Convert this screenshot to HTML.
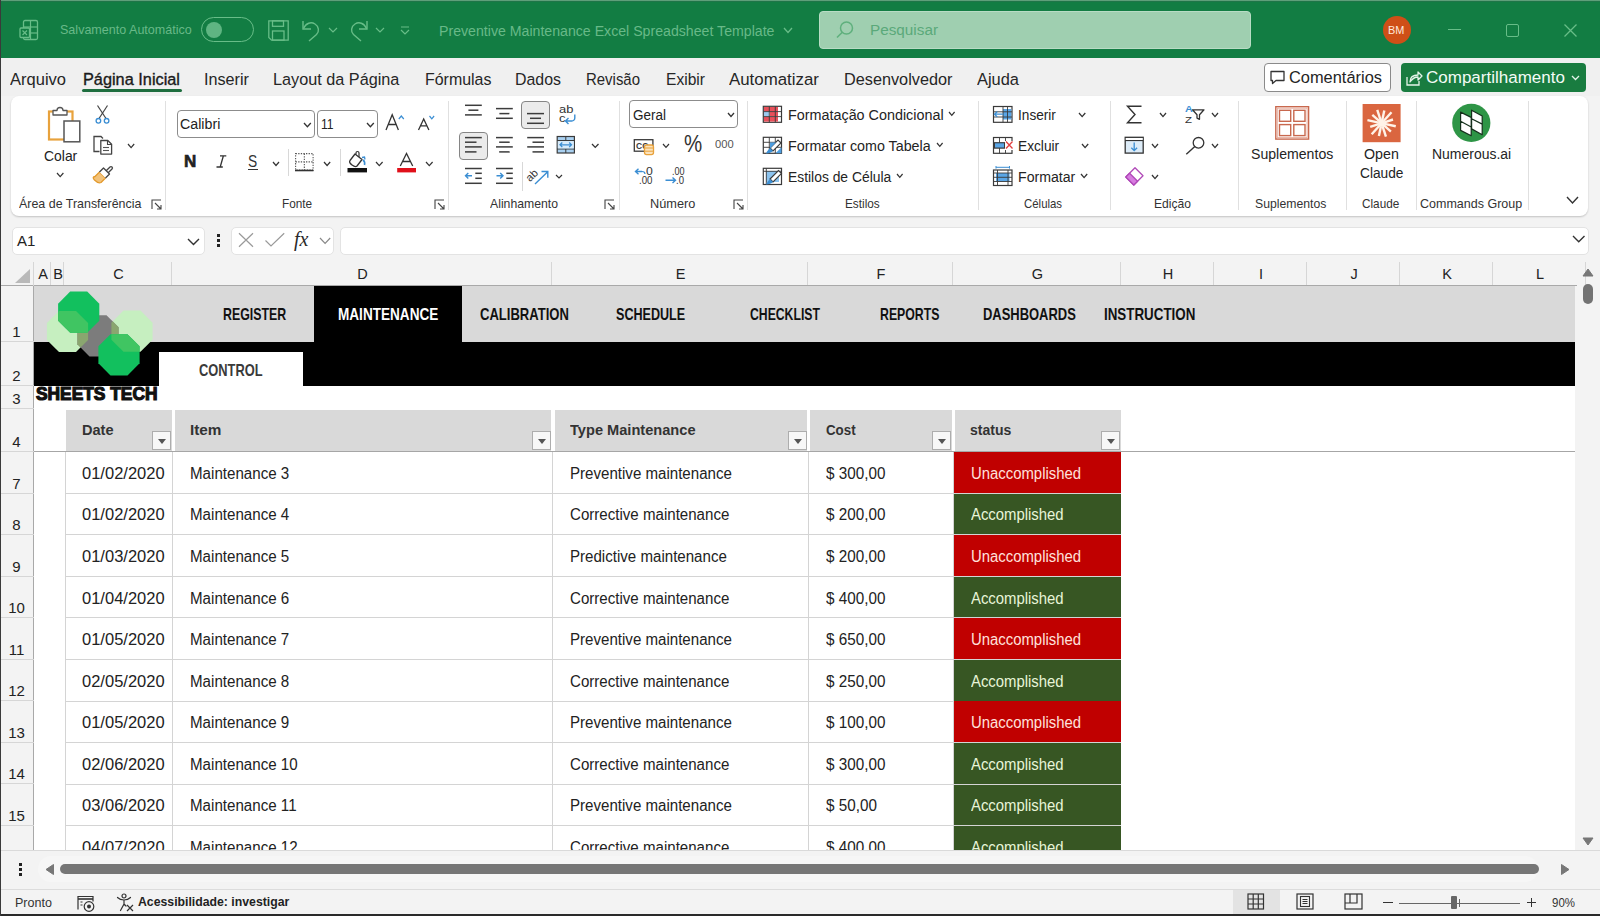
<!DOCTYPE html><html><head><meta charset="utf-8"><style>
*{box-sizing:border-box;margin:0;padding:0}
html,body{width:1600px;height:916px;overflow:hidden;background:#f3f3f3;font-family:"Liberation Sans",sans-serif;color:#242424}
.a{position:absolute}
.t{position:absolute;white-space:nowrap;line-height:1}
svg{position:absolute;overflow:visible}
.sep{position:absolute;width:1px;background:#e0e0e0}
.glab{position:absolute;top:198px;font-size:12.5px;color:#333;white-space:nowrap;line-height:1}
.colh{position:absolute;top:262px;height:24px;border-right:1px solid #d6d6d6;font-size:14.5px;text-align:center;line-height:25px;color:#222;padding-left:2px}
.rowh{position:absolute;left:0;width:34px;background:#f3f3f3;border-right:1px solid #a9a9a9;font-size:15px;color:#222}
.rowh span{position:absolute;bottom:2px;left:0;width:33px;text-align:center;line-height:16px}
.rh{position:absolute;left:0;width:34px;height:1px;background:#d6d6d6}
.cell{position:absolute;font-size:15px;color:#222;white-space:nowrap;line-height:1}
.nav{position:absolute;top:307px;font-size:14.5px;font-weight:bold;color:#111;white-space:nowrap;line-height:1;letter-spacing:-0.2px}
.hdr{position:absolute;top:410px;height:41px;background:#d9d9d9}
.hdr span{position:absolute;left:16px;top:13px;font-size:15px;font-weight:bold;color:#333;line-height:1;white-space:nowrap}
.fb{position:absolute;top:431px;width:19px;height:19px;background:#f7f7f7;border:1px solid #adadad}
.fb:after{content:"";position:absolute;left:5px;top:7px;border-left:4px solid transparent;border-right:4px solid transparent;border-top:5px solid #555}
.menu{position:absolute;top:70px;font-size:16.5px;color:#242424;white-space:nowrap;line-height:1}
.rib{position:absolute;font-size:14.5px;color:#242424;white-space:nowrap;line-height:1}
.chev{position:absolute}
</style></head><body>
<div class="a" style="left:0;top:0;width:1600px;height:58px;background:#127d43"></div>
<div class="a" style="left:0;top:0;width:1600px;height:1px;background:#5f9f7a"></div>
<div class="a" style="left:0;top:1px;width:1600px;height:1px;background:#1f7548"></div>
<div class="a" style="left:0;top:0;width:1px;height:916px;background:#3a3a3a"></div>
<svg style="left:19px;top:19px" width="22" height="22" viewBox="0 0 22 22"><rect x="4.5" y="1.5" width="14" height="19" rx="1.5" fill="none" stroke="#68bd88" stroke-width="1.3"/><line x1="4.5" y1="8" x2="18.5" y2="8" stroke="#68bd88" stroke-width="1.2"/><line x1="4.5" y1="14" x2="18.5" y2="14" stroke="#68bd88" stroke-width="1.2"/><line x1="11.5" y1="1.5" x2="11.5" y2="20.5" stroke="#68bd88" stroke-width="1.2"/><rect x="1" y="9" width="9.5" height="9.5" rx="1" fill="#127d43" stroke="#68bd88" stroke-width="1.3"/><path d="M3.5 11.5l4.5 4.5M8 11.5l-4.5 4.5" stroke="#68bd88" stroke-width="1.2"/></svg>
<div class="t" style="left:60.0px;top:23.8px;font-size:12.90px;color:#68b988;transform:scaleX(0.973);transform-origin:0 0;">Salvamento Automático</div>
<div class="a" style="left:201px;top:17px;width:53px;height:25px;border:1.3px solid #68bd88;border-radius:13px"></div>
<div class="a" style="left:206px;top:22px;width:16px;height:16px;border-radius:8px;background:#5fb582"></div>
<svg style="left:268px;top:20px" width="21" height="21" viewBox="0 0 21 21"><path d="M0.8 0.8h19.4v19.4H3.5L0.8 17.5z" fill="none" stroke="#68bd88" stroke-width="1.3"/><rect x="4.5" y="0.8" width="11" height="5.5" fill="none" stroke="#68bd88" stroke-width="1.3"/><rect x="4.5" y="11" width="11.5" height="9.2" fill="none" stroke="#68bd88" stroke-width="1.3"/></svg>
<svg style="left:302px;top:20px" width="24" height="24" viewBox="0 0 24 24"><path d="M1 1v8h8" fill="none" stroke="#68bd88" stroke-width="1.4"/><path d="M1.5 8.5C4 3 9 1.5 13 4c4 2.5 4.5 7.5 1.5 10.5L7 21" fill="none" stroke="#68bd88" stroke-width="1.4"/></svg>
<svg style="left:328px;top:27px" width="10" height="6" viewBox="0 0 10 6"><path d="M1 1l4 4 4-4" fill="none" stroke="#68bd88" stroke-width="1.2"/></svg>
<svg style="left:345px;top:20px" width="24" height="24" viewBox="0 0 24 24"><path d="M22 1v8h-8" fill="none" stroke="#68bd88" stroke-width="1.4"/><path d="M21.5 8.5C19 3 14 1.5 10 4c-4 2.5-4.5 7.5-1.5 10.5L16 21" fill="none" stroke="#68bd88" stroke-width="1.4"/></svg>
<svg style="left:375px;top:27px" width="10" height="6" viewBox="0 0 10 6"><path d="M1 1l4 4 4-4" fill="none" stroke="#68bd88" stroke-width="1.2"/></svg>
<svg style="left:400px;top:26px" width="10" height="10" viewBox="0 0 10 10"><path d="M1 1h8M1 4l4 4 4-4" fill="none" stroke="#68bd88" stroke-width="1.2"/></svg>
<div class="t" style="left:438.5px;top:22.8px;font-size:15.07px;color:#68b988;transform:scaleX(0.939);transform-origin:0 0;">Preventive Maintenance Excel Spreadsheet Template</div>
<svg style="left:783px;top:27px" width="10" height="7" viewBox="0 0 10 7"><path d="M1 1l4 4.5 4-4.5" fill="none" stroke="#68bd88" stroke-width="1.3"/></svg>
<div class="a" style="left:819px;top:11px;width:432px;height:38px;background:#9fcfb0;border:1px solid #b8dcc5;border-radius:4px"></div>
<svg style="left:835px;top:20px" width="20" height="20" viewBox="0 0 20 20"><circle cx="11.5" cy="8" r="6" fill="none" stroke="#5fb07d" stroke-width="1.5"/><path d="M7.3 12.2L2 17.5" stroke="#5fb07d" stroke-width="1.6"/></svg>
<div class="t" style="left:870.4px;top:21.8px;font-size:15.22px;color:#5aa97a;transform:scaleX(1.005);transform-origin:0 0;">Pesquisar</div>
<div class="a" style="left:1383px;top:16px;width:28px;height:28px;border-radius:14px;background:#cf4f17"></div>
<div class="t" style="left:1388.4px;top:24.6px;font-size:11.59px;color:#ffe9dc;transform:scaleX(0.943);transform-origin:0 0;">BM</div>
<div class="a" style="left:1448px;top:29px;width:13px;height:1.3px;background:#68bd88"></div>
<div class="a" style="left:1506px;top:24px;width:13px;height:13px;border:1.3px solid #68bd88;border-radius:2px"></div>
<svg style="left:1564px;top:24px" width="13" height="13" viewBox="0 0 13 13"><path d="M0.5 0.5l12 12M12.5 0.5l-12 12" stroke="#68bd88" stroke-width="1.3"/></svg>
<div class="a" style="left:1px;top:58px;width:1599px;height:38px;background:#f0f0f0"></div>
<div class="t" style="left:10.3px;top:70.6px;font-size:16.23px;color:#262626;transform:scaleX(1.018);transform-origin:0 0;">Arquivo</div>
<div class="t" style="left:83.0px;top:70.6px;font-size:16.23px;color:#1a1a1a;transform:scaleX(1.005);transform-origin:0 0;-webkit-text-stroke:0.35px #1a1a1a;">Página Inicial</div>
<div class="t" style="left:203.5px;top:70.6px;font-size:16.23px;color:#262626;transform:scaleX(0.998);transform-origin:0 0;">Inserir</div>
<div class="t" style="left:272.5px;top:70.6px;font-size:16.23px;color:#262626;transform:scaleX(1.001);transform-origin:0 0;">Layout da Página</div>
<div class="t" style="left:425.0px;top:70.6px;font-size:16.23px;color:#262626;transform:scaleX(0.983);transform-origin:0 0;">Fórmulas</div>
<div class="t" style="left:515.0px;top:70.6px;font-size:16.23px;color:#262626;transform:scaleX(0.980);transform-origin:0 0;">Dados</div>
<div class="t" style="left:586.0px;top:70.6px;font-size:16.23px;color:#262626;transform:scaleX(0.921);transform-origin:0 0;">Revisão</div>
<div class="t" style="left:666.0px;top:70.6px;font-size:16.23px;color:#262626;transform:scaleX(0.961);transform-origin:0 0;">Exibir</div>
<div class="t" style="left:729.0px;top:70.6px;font-size:16.23px;color:#262626;transform:scaleX(1.039);transform-origin:0 0;">Automatizar</div>
<div class="t" style="left:844.0px;top:70.6px;font-size:16.23px;color:#262626;transform:scaleX(1.002);transform-origin:0 0;">Desenvolvedor</div>
<div class="t" style="left:976.5px;top:70.6px;font-size:16.23px;color:#262626;transform:scaleX(1.012);transform-origin:0 0;">Ajuda</div>
<div class="a" style="left:82px;top:89px;width:100px;height:3px;background:#1e6e3f;border-radius:2px"></div>
<div class="a" style="left:1264px;top:63px;width:127px;height:29px;background:#fff;border:1px solid #8a8a8a;border-radius:4px"></div>
<svg style="left:1269px;top:69px" width="18" height="18" viewBox="0 0 18 18"><path d="M2 2.5h13v9H7l-3.5 3v-3H2z" fill="none" stroke="#333" stroke-width="1.3" stroke-linejoin="round"/></svg>
<div class="t" style="left:1289.0px;top:69.4px;font-size:16.23px;color:#242424;transform:scaleX(1.011);transform-origin:0 0;">Comentários</div>
<div class="a" style="left:1401px;top:63px;width:185px;height:29px;background:#197c40;border-radius:4px"></div>
<svg style="left:1405px;top:69px" width="18" height="18" viewBox="0 0 18 18"><path d="M2 8v8h12v-4" fill="none" stroke="#e6f4ea" stroke-width="1.3"/><path d="M5 13c0-5 3-7 8-7V3l4 4-4 4V8c-4 0-6 2-8 5z" fill="none" stroke="#e6f4ea" stroke-width="1.3" stroke-linejoin="round"/></svg>
<div class="t" style="left:1426.0px;top:69.4px;font-size:16.23px;color:#f4fbf6;transform:scaleX(1.048);transform-origin:0 0;">Compartilhamento</div>
<svg style="left:1571px;top:75px" width="9" height="6" viewBox="0 0 9 6"><path d="M1 1l3.5 3.5L8 1" fill="none" stroke="#e6f4ea" stroke-width="1.3"/></svg>
<div class="a" style="left:11px;top:96px;width:1577px;height:120px;background:#fff;border-radius:8px;box-shadow:0 1px 2px rgba(0,0,0,.2)"></div>
<div class="sep" style="left:448px;top:101px;height:109px"></div>
<div class="sep" style="left:618.5px;top:101px;height:109px"></div>
<div class="sep" style="left:747px;top:101px;height:109px"></div>
<div class="sep" style="left:977.8px;top:101px;height:109px"></div>
<div class="sep" style="left:1109.5px;top:101px;height:109px"></div>
<div class="sep" style="left:1237.5px;top:101px;height:109px"></div>
<div class="sep" style="left:1345.8px;top:101px;height:109px"></div>
<div class="sep" style="left:1415.5px;top:101px;height:109px"></div>
<div class="sep" style="left:1527.5px;top:101px;height:109px"></div>
<svg style="left:44px;top:103px" width="40" height="42" viewBox="44 103 40 42"><rect x="49" y="111.5" width="23.5" height="28" fill="#fff" stroke="#e8a23c" stroke-width="2.2"/><path d="M53 115v-4.5h4a3 3 0 0 1 6 0h4v4.5z" fill="#fff" stroke="#555" stroke-width="1.3" stroke-linejoin="round"/><rect x="64" y="121" width="15.8" height="20.8" fill="#fff" stroke="#555" stroke-width="1.5"/></svg>
<div class="t" style="left:43.8px;top:149.1px;font-size:14.20px;color:#222;transform:scaleX(0.981);transform-origin:0 0;">Colar</div>
<svg style="left:55.3px;top:171.2px" width="10.4" height="7.6" viewBox="55.3 171.2 10.4 7.6"><path d="M57.3 173.2L60.5 176.79999999999998L63.699999999999996 173.2" fill="none" stroke="#333" stroke-width="1.2"/></svg>
<svg style="left:93px;top:104px" width="20" height="22" viewBox="93 104 20 22"><line x1="97.5" y1="105.5" x2="106" y2="118.5" stroke="#444" stroke-width="1.2"/><line x1="107.5" y1="105.5" x2="99" y2="118.5" stroke="#444" stroke-width="1.2"/><circle cx="98.4" cy="120.8" r="2.3" fill="none" stroke="#3b8ed3" stroke-width="1.3"/><circle cx="106.6" cy="120.8" r="2.3" fill="none" stroke="#3b8ed3" stroke-width="1.3"/></svg>
<svg style="left:91px;top:133px" width="24" height="24" viewBox="91 133 24 24"><path d="M99.5 151.5h-5.5v-15h7l2 2" fill="none" stroke="#444" stroke-width="1.3"/><path d="M100.8 140.5h7l3.8 3.8v9.8h-10.8z" fill="#fff" stroke="#444" stroke-width="1.3" stroke-linejoin="round"/><path d="M107.5 140.5v4h4" fill="none" stroke="#444" stroke-width="1.1"/><line x1="103" y1="147.5" x2="109" y2="147.5" stroke="#555" stroke-width="1.1"/><line x1="103" y1="150.5" x2="109" y2="150.5" stroke="#555" stroke-width="1.1"/></svg>
<svg style="left:126.19999999999999px;top:141.8px" width="10.2" height="7.6" viewBox="126.19999999999999 141.8 10.2 7.6"><path d="M128.2 143.8L131.29999999999998 147.4L134.39999999999998 143.8" fill="none" stroke="#333" stroke-width="1.2"/></svg>
<svg style="left:92px;top:165px" width="22" height="22" viewBox="92 165 22 22"><path d="M95 176.5l4.5-4.5 6 6-4.5 4.5c-2 1-4.5-.5-6.5-2.5s-1.5-3.5.5-3.5z" fill="#f2c27a" stroke="#e39a2c" stroke-width="1.3" stroke-linejoin="round"/><path d="M99.5 172l4-4 6 6-4 4" fill="#fff" stroke="#444" stroke-width="1.3" stroke-linejoin="round"/><path d="M106.2 170.8l3.8-3.8a1.4 1.4 0 0 1 2 2l-3.8 3.8" fill="none" stroke="#444" stroke-width="1.3"/></svg>
<div class="sep" style="left:165px;top:101px;height:109px"></div>
<div class="a" style="left:176.5px;top:109.5px;width:138px;height:28.5px;border:1px solid #8c8c8c;border-radius:4px;background:#fff"></div>
<div class="t" style="left:179.8px;top:117.2px;font-size:14.93px;color:#222;transform:scaleX(0.953);transform-origin:0 0;">Calibri</div>
<svg style="left:302px;top:120.6px" width="10.8" height="7.8" viewBox="302 120.6 10.8 7.8"><path d="M304 122.6L307.4 126.39999999999999L310.8 122.6" fill="none" stroke="#333" stroke-width="1.3"/></svg>
<div class="a" style="left:317px;top:109.5px;width:60.5px;height:28.5px;border:1px solid #8c8c8c;border-radius:4px;background:#fff"></div>
<div class="t" style="left:320.8px;top:117.2px;font-size:14.93px;color:#222;transform:scaleX(0.813);transform-origin:0 0;">11</div>
<svg style="left:365px;top:120.6px" width="10.8" height="7.8" viewBox="365 120.6 10.8 7.8"><path d="M367 122.6L370.4 126.39999999999999L373.8 122.6" fill="none" stroke="#333" stroke-width="1.3"/></svg>
<svg style="left:384px;top:112px" width="22" height="20" viewBox="384 112 22 20"><path d="M386 130l6.2-15.3 6.2 15.3M388.3 124.5h7.8" fill="none" stroke="#333" stroke-width="1.3"/><path d="M398.8 119l2.5-3 2.5 3" fill="none" stroke="#3b8ed3" stroke-width="1.2"/></svg>
<svg style="left:416px;top:112px" width="22" height="20" viewBox="416 112 22 20"><path d="M418.5 130l5.2-11 5.2 11M420.3 125.8h6.8" fill="none" stroke="#333" stroke-width="1.3"/><path d="M429.5 116l2.3 2.8 2.3-2.8" fill="none" stroke="#3b8ed3" stroke-width="1.2"/></svg>
<div class="t" style="left:184.0px;top:153.2px;font-size:16.38px;font-weight:bold;color:#222;transform:scaleX(1.040);transform-origin:0 0;-webkit-text-stroke:0.6px #222;">N</div>
<svg style="left:215px;top:153px" width="14" height="16" viewBox="215 153 14 16"><path d="M220 155.8h6.3M216.5 167h6.3M223.4 155.8l-3.2 11.2" fill="none" stroke="#333" stroke-width="1.3"/></svg>
<div class="t" style="left:248.0px;top:153.2px;font-size:16.38px;color:#333;transform:scaleX(0.842);transform-origin:0 0;">S</div>
<div class="a" style="left:247.5px;top:169px;width:10px;height:1.3px;background:#333"></div>
<svg style="left:270.6px;top:159.5px" width="10" height="7.5" viewBox="270.6 159.5 10 7.5"><path d="M272.6 161.5L275.6 165.0L278.6 161.5" fill="none" stroke="#333" stroke-width="1.2"/></svg>
<div class="sep" style="left:288px;top:148.5px;height:27.5px;background:#d8d8d8"></div>
<svg style="left:294px;top:152px" width="22" height="22" viewBox="294 152 22 22"><rect x="295.6" y="153.6" width="17.5" height="16.5" fill="none" stroke="#555" stroke-width="1.1" stroke-dasharray="1.3 1.3"/><path d="M304.35 153.6v16.5M295.6 161.85h17.5" stroke="#555" stroke-width="1.1" stroke-dasharray="1.3 1.3"/><path d="M295 170.5h18.5" stroke="#333" stroke-width="1.6"/></svg>
<svg style="left:322.2px;top:159.5px" width="10.2" height="7.5" viewBox="322.2 159.5 10.2 7.5"><path d="M324.2 161.5L327.3 165.0L330.4 161.5" fill="none" stroke="#333" stroke-width="1.2"/></svg>
<div class="sep" style="left:340px;top:148.5px;height:27.5px;background:#d8d8d8"></div>
<svg style="left:345px;top:151px" width="24" height="24" viewBox="345 151 24 24"><path d="M350 160.5l5-6.5 7 5.5-5 6.5c-1 1-3 .5-5-1s-3-3-2-4.5z" fill="#fff" stroke="#333" stroke-width="1.3" stroke-linejoin="round"/><path d="M356 154.5v-1.5a1.5 1.5 0 0 1 3 0v4" fill="none" stroke="#333" stroke-width="1.2"/><path d="M363 160c1.5 1 2 3 1.5 5" fill="none" stroke="#3b8ed3" stroke-width="1.6"/><path d="M362 157.5l2.5-.5.5 2.5" fill="none" stroke="#3b8ed3" stroke-width="1.3"/><rect x="347.5" y="168" width="19.5" height="4.4" fill="#111"/></svg>
<svg style="left:374.3px;top:160px" width="10.6" height="7.6" viewBox="374.3 160 10.6 7.6"><path d="M376.3 162L379.6 165.6L382.90000000000003 162" fill="none" stroke="#333" stroke-width="1.2"/></svg>
<svg style="left:396px;top:151px" width="22" height="24" viewBox="396 151 22 24"><path d="M400.3 166l6.2-12.5 6.2 12.5M402.5 161.5h8" fill="none" stroke="#333" stroke-width="1.3"/><rect x="397.2" y="168" width="18.8" height="4.4" fill="#e0101a"/></svg>
<svg style="left:423.6px;top:160px" width="10.6" height="7.6" viewBox="423.6 160 10.6 7.6"><path d="M425.6 162L428.90000000000003 165.6L432.20000000000005 162" fill="none" stroke="#333" stroke-width="1.2"/></svg>
<div class="a" style="left:521px;top:100.5px;width:28.5px;height:28px;background:#ebebeb;border:1px solid #858585;border-radius:4px"></div>
<div class="a" style="left:459px;top:131.5px;width:28.5px;height:28px;background:#ebebeb;border:1px solid #858585;border-radius:4px"></div>
<svg style="left:455px;top:98px" width="100" height="95" viewBox="455 98 100 95"><line x1="465.0" y1="105.3" x2="481.8" y2="105.3" stroke="#3c3c3c" stroke-width="1.5"/><line x1="468.4" y1="110.2" x2="478.4" y2="110.2" stroke="#3c3c3c" stroke-width="1.5"/><line x1="465.0" y1="114.9" x2="481.8" y2="114.9" stroke="#3c3c3c" stroke-width="1.5"/><line x1="496.0" y1="108.6" x2="512.8" y2="108.6" stroke="#3c3c3c" stroke-width="1.5"/><line x1="499.4" y1="113.6" x2="509.4" y2="113.6" stroke="#3c3c3c" stroke-width="1.5"/><line x1="496.0" y1="118.3" x2="512.8" y2="118.3" stroke="#3c3c3c" stroke-width="1.5"/><line x1="527.0" y1="113.6" x2="544.0" y2="113.6" stroke="#3c3c3c" stroke-width="1.5"/><line x1="530.0" y1="118.3" x2="541.0" y2="118.3" stroke="#3c3c3c" stroke-width="1.5"/><line x1="527.0" y1="123.3" x2="544.0" y2="123.3" stroke="#3c3c3c" stroke-width="1.5"/><line x1="465" y1="137.6" x2="481.8" y2="137.6" stroke="#3c3c3c" stroke-width="1.5"/><line x1="465" y1="142.2" x2="476.5" y2="142.2" stroke="#3c3c3c" stroke-width="1.5"/><line x1="465" y1="146.9" x2="481.8" y2="146.9" stroke="#3c3c3c" stroke-width="1.5"/><line x1="465" y1="151.9" x2="476.5" y2="151.9" stroke="#3c3c3c" stroke-width="1.5"/><line x1="496.0" y1="137.6" x2="512.8" y2="137.6" stroke="#3c3c3c" stroke-width="1.5"/><line x1="499.15" y1="142.2" x2="509.65" y2="142.2" stroke="#3c3c3c" stroke-width="1.5"/><line x1="496.0" y1="146.9" x2="512.8" y2="146.9" stroke="#3c3c3c" stroke-width="1.5"/><line x1="499.15" y1="151.9" x2="509.65" y2="151.9" stroke="#3c3c3c" stroke-width="1.5"/><line x1="527.2" y1="137.6" x2="544.0" y2="137.6" stroke="#3c3c3c" stroke-width="1.5"/><line x1="532.5" y1="142.2" x2="544.0" y2="142.2" stroke="#3c3c3c" stroke-width="1.5"/><line x1="527.2" y1="146.9" x2="544.0" y2="146.9" stroke="#3c3c3c" stroke-width="1.5"/><line x1="532.5" y1="151.9" x2="544.0" y2="151.9" stroke="#3c3c3c" stroke-width="1.5"/><line x1="465.0" y1="168.5" x2="481.8" y2="168.5" stroke="#3c3c3c" stroke-width="1.5"/><line x1="475.3" y1="173.3" x2="481.8" y2="173.3" stroke="#3c3c3c" stroke-width="1.5"/><line x1="475.3" y1="178.3" x2="481.8" y2="178.3" stroke="#3c3c3c" stroke-width="1.5"/><line x1="465.0" y1="183.3" x2="481.8" y2="183.3" stroke="#3c3c3c" stroke-width="1.5"/><line x1="495.99999999999994" y1="168.5" x2="512.8" y2="168.5" stroke="#3c3c3c" stroke-width="1.5"/><line x1="506.29999999999995" y1="173.3" x2="512.8" y2="173.3" stroke="#3c3c3c" stroke-width="1.5"/><line x1="506.29999999999995" y1="178.3" x2="512.8" y2="178.3" stroke="#3c3c3c" stroke-width="1.5"/><line x1="495.99999999999994" y1="183.3" x2="512.8" y2="183.3" stroke="#3c3c3c" stroke-width="1.5"/><path d="M472 175.8h-6.5M468.3 173l-2.8 2.8 2.8 2.8" fill="none" stroke="#3b8ed3" stroke-width="1.4"/><path d="M496.5 175.8h6.5M500.2 173l2.8 2.8-2.8 2.8" fill="none" stroke="#3b8ed3" stroke-width="1.4"/></svg>
<div class="t" style="left:559.3px;top:105.1px;font-size:10.00px;color:#333;transform:scaleX(1.295);transform-origin:0 0;">ab</div>
<div class="t" style="left:559.3px;top:112.9px;font-size:11.01px;color:#333;transform:scaleX(1.180);transform-origin:0 0;">c</div>
<svg style="left:562px;top:113px" width="16" height="12" viewBox="562 113 16 12"><path d="M574.8 114.5v3.5a3 3 0 0 1-3 3h-6M568.5 118l-3 3 3 3" fill="none" stroke="#3b8ed3" stroke-width="1.4"/></svg>
<svg style="left:555px;top:134px" width="22" height="22" viewBox="555 134 22 22"><rect x="557.2" y="136.5" width="17.2" height="16.5" fill="#a9d0f0" stroke="#3a3a3a" stroke-width="1.2"/><path d="M557.2 140.5h17.2M557.2 149h17.2M565.8 136.5v4M565.8 149v4" stroke="#3a3a3a" stroke-width="1"/><rect x="557.8" y="141.1" width="16" height="7.3" fill="#d8ebfa"/><path d="M560 144.8h11.5M562.3 142.5l-2.3 2.3 2.3 2.3M569.2 142.5l2.3 2.3-2.3 2.3" fill="none" stroke="#3b8ed3" stroke-width="1.3"/></svg>
<svg style="left:589.5px;top:142.3px" width="10.5" height="7.4" viewBox="589.5 142.3 10.5 7.4"><path d="M591.5 144.3L594.75 147.70000000000002L598.0 144.3" fill="none" stroke="#333" stroke-width="1.3"/></svg>
<div class="sep" style="left:521.5px;top:162px;height:29px;background:#d8d8d8"></div>
<div class="t" style="left:527px;top:168px;font-size:11px;color:#333;transform:rotate(-45deg);transform-origin:8px 8px">ab</div>
<svg style="left:530px;top:168px" width="22" height="20" viewBox="530 168 22 20"><path d="M535 184l12.5-12M541.5 171.5h6.3v6.3" fill="none" stroke="#3b8ed3" stroke-width="1.4"/></svg>
<svg style="left:554px;top:173.4px" width="10" height="7" viewBox="554 173.4 10 7"><path d="M556 175.4L559.0 178.4L562 175.4" fill="none" stroke="#333" stroke-width="1.2"/></svg>
<div class="a" style="left:629.3px;top:100.3px;width:109px;height:28.2px;border:1px solid #8c8c8c;border-radius:4px;background:#fff"></div>
<div class="t" style="left:632.5px;top:107.5px;font-size:14.49px;color:#222;transform:scaleX(0.931);transform-origin:0 0;">Geral</div>
<svg style="left:725.8px;top:111.2px" width="10" height="7.5" viewBox="725.8 111.2 10 7.5"><path d="M727.8 113.2L730.8 116.7L733.8 113.2" fill="none" stroke="#333" stroke-width="1.3"/></svg>
<svg style="left:632px;top:137px" width="24" height="20" viewBox="632 137 24 20"><rect x="634.3" y="139.7" width="18.6" height="11.5" fill="none" stroke="#3a3a3a" stroke-width="1.3"/><text x="636" y="149" font-family="Liberation Sans" font-size="8.5" font-weight="bold" fill="#3a3a3a">CC</text><rect x="644.5" y="145" width="9" height="9.6" rx="2" fill="#fbe3bd" stroke="#e8a23c" stroke-width="1.3"/><path d="M644.5 148h9M644.5 151.2h9" stroke="#e8a23c" stroke-width="1"/></svg>
<svg style="left:661.3px;top:142.3px" width="10" height="7.3" viewBox="661.3 142.3 10 7.3"><path d="M663.3 144.3L666.3 147.60000000000002L669.3 144.3" fill="none" stroke="#333" stroke-width="1.2"/></svg>
<div class="t" style="left:683.8px;top:133.4px;font-size:23.48px;color:#333;transform:scaleX(0.872);transform-origin:0 0;">%</div>
<div class="t" style="left:714.6px;top:139.1px;font-size:11.59px;color:#555;transform:scaleX(0.967);transform-origin:0 0;">000</div>
<svg style="left:632px;top:165px" width="24" height="22" viewBox="632 165 24 22"><path d="M642 171.5h-6.5M638.5 168.8l-3 2.7 3 2.7M636 171.5" fill="none" stroke="#3b8ed3" stroke-width="1.4"/><path d="M642 171.5c3 0 3 2.5 3 2.5" fill="none" stroke="#3b8ed3" stroke-width="1.2"/></svg>
<div class="t" style="left:645.5px;top:166.6px;font-size:10.43px;color:#333;transform:scaleX(1.172);transform-origin:0 0;">0</div>
<div class="t" style="left:638.8px;top:175.6px;font-size:10.43px;color:#333;transform:scaleX(0.931);transform-origin:0 0;">.00</div>
<div class="t" style="left:672.0px;top:166.6px;font-size:10.43px;color:#333;transform:scaleX(0.869);transform-origin:0 0;">.00</div>
<div class="t" style="left:675.5px;top:175.6px;font-size:10.43px;color:#333;transform:scaleX(0.919);transform-origin:0 0;">.0</div>
<svg style="left:663px;top:173px" width="18" height="12" viewBox="663 173 18 12"><path d="M665.5 180.2h10M672.5 177.5l3 2.7-3 2.7" fill="none" stroke="#3b8ed3" stroke-width="1.4"/></svg>
<svg style="left:761px;top:104px" width="23" height="21" viewBox="761 104 23 21"><rect x="763.3" y="106.3" width="18.2" height="16" fill="#fff" stroke="#3a3a3a" stroke-width="1.2"/><rect x="764" y="107" width="14" height="4.5" fill="#e8505a"/><rect x="770" y="111.5" width="8" height="4.8" fill="#e8505a"/><rect x="764" y="116.8" width="14" height="4.8" fill="#e8505a"/><rect x="764" y="111.8" width="5" height="4.5" fill="#9ccbef"/><path d="M763.3 111.6h18.2M763.3 116.6h18.2M769.3 106.3v16M775.3 106.3v16" stroke="#3a3a3a" stroke-width=".9"/></svg>
<div class="t" style="left:787.8px;top:108.1px;font-size:14.35px;color:#242424;transform:scaleX(1.001);transform-origin:0 0;">Formatação Condicional</div>
<svg style="left:947.2px;top:110.3px" width="9.6" height="7.3" viewBox="947.2 110.3 9.6 7.3"><path d="M949.2 112.3L952.0 115.6L954.8000000000001 112.3" fill="none" stroke="#333" stroke-width="1.2"/></svg>
<svg style="left:761px;top:135px" width="23" height="21" viewBox="761 135 23 21"><rect x="763.3" y="137.3" width="18.2" height="16" fill="#fff" stroke="#3a3a3a" stroke-width="1.2"/><path d="M763.3 142.3h18.2M763.3 147.3h18.2M769.3 137.3v16M775.3 137.3v16" stroke="#3a3a3a" stroke-width=".9"/><path d="M770 148l8-8 3 3-8 8z" fill="#fff" stroke="#3a3a3a" stroke-width="1.1"/><path d="M770 142.5h6l-6 6z" fill="#4e9ee0"/><path d="M766 153.5c1-2.5 2.5-4 4-5.5l3 3c-1.5 1.5-4 2.5-7 2.5z" fill="#3b8ed3"/><path d="M775.5 153.3l6-6v6z" fill="#4e9ee0"/></svg>
<div class="t" style="left:787.8px;top:138.7px;font-size:14.35px;color:#242424;transform:scaleX(0.996);transform-origin:0 0;">Formatar como Tabela</div>
<svg style="left:935px;top:141px" width="9.6" height="7.3" viewBox="935 141 9.6 7.3"><path d="M937 143L939.8 146.3L942.6 143" fill="none" stroke="#333" stroke-width="1.2"/></svg>
<svg style="left:761px;top:166px" width="23" height="21" viewBox="761 166 23 21"><rect x="763.3" y="168.3" width="18.2" height="16.2" fill="#fff" stroke="#3a3a3a" stroke-width="1.2"/><rect x="766" y="171" width="13" height="11" fill="#8cc3ee"/><path d="M763.3 171.3h18.2M766.3 168.3v16.2" stroke="#3a3a3a" stroke-width=".9"/><path d="M770 179l8.5-8.5 3 3-8.5 8.5z" fill="#fff" stroke="#3a3a3a" stroke-width="1.1"/><path d="M766 184.5c1-2.5 2.5-4 4-5.5l3 3c-1.5 1.5-4 2.5-7 2.5z" fill="#3b8ed3"/></svg>
<div class="t" style="left:787.8px;top:169.5px;font-size:14.35px;color:#242424;transform:scaleX(0.966);transform-origin:0 0;">Estilos de Célula</div>
<svg style="left:894.8px;top:171.8px" width="9.6" height="7.3" viewBox="894.8 171.8 9.6 7.3"><path d="M896.8 173.8L899.5999999999999 177.10000000000002L902.4 173.8" fill="none" stroke="#333" stroke-width="1.2"/></svg>
<svg style="left:991px;top:104px" width="24" height="22" viewBox="991 104 24 22"><rect x="993.5" y="106.5" width="18.5" height="15.8" fill="#fff" stroke="#3a3a3a" stroke-width="1.2"/><rect x="1003" y="109" width="8.3" height="10.5" fill="#5aa6e6"/><path d="M993.5 111.8h18.5M993.5 117h18.5M1003 106.5v15.8M1007.5 106.5v15.8" stroke="#3a3a3a" stroke-width=".9"/><path d="M1003 114.2h-8.5M997.3 111.5l-2.8 2.7 2.8 2.7" fill="none" stroke="#3b8ed3" stroke-width="1.3"/></svg>
<div class="t" style="left:1017.8px;top:107.7px;font-size:14.35px;color:#242424;transform:scaleX(0.951);transform-origin:0 0;">Inserir</div>
<svg style="left:1076.5px;top:110.8px" width="10.3" height="7.6" viewBox="1076.5 110.8 10.3 7.6"><path d="M1078.5 112.8L1081.65 116.39999999999999L1084.8 112.8" fill="none" stroke="#333" stroke-width="1.3"/></svg>
<svg style="left:991px;top:135px" width="24" height="22" viewBox="991 135 24 22"><rect x="993.5" y="137.5" width="18.5" height="15.8" fill="none" stroke="#3a3a3a" stroke-width="1.2"/><path d="M993.5 142.8h18.5M993.5 148h18.5M999.5 137.5v15.8M1005.5 137.5v15.8" stroke="#3a3a3a" stroke-width=".9"/><rect x="994.5" y="142.8" width="10" height="5.2" fill="#5aa6e6" stroke="#3a3a3a" stroke-width="1"/><rect x="1005" y="141" width="8" height="9" fill="#fff"/><path d="M1006 141.5l6.5 7M1012.5 141.5l-6.5 7" stroke="#e04040" stroke-width="1.3"/></svg>
<div class="t" style="left:1017.8px;top:138.6px;font-size:14.35px;color:#242424;transform:scaleX(0.955);transform-origin:0 0;">Excluir</div>
<svg style="left:1079.8px;top:141.8px" width="10.2" height="7.6" viewBox="1079.8 141.8 10.2 7.6"><path d="M1081.8 143.8L1084.8999999999999 147.4L1088.0 143.8" fill="none" stroke="#333" stroke-width="1.3"/></svg>
<svg style="left:991px;top:165px" width="24" height="23" viewBox="991 165 24 23"><rect x="993.5" y="170" width="18.5" height="15.5" fill="#fff" stroke="#3a3a3a" stroke-width="1.2"/><rect x="996" y="173" width="13.5" height="8.5" fill="#5aa6e6"/><path d="M993.5 173h18.5M993.5 177.3h18.5M993.5 181.5h18.5M997.5 170v15.5M1008 170v15.5" stroke="#3a3a3a" stroke-width=".9"/><path d="M996 167.3h13.5M996 166v2.6M1009.5 166v2.6" stroke="#3b8ed3" stroke-width="1"/></svg>
<div class="t" style="left:1017.8px;top:169.5px;font-size:14.35px;color:#242424;transform:scaleX(0.985);transform-origin:0 0;">Formatar</div>
<svg style="left:1078.6px;top:172.3px" width="10.2" height="7.6" viewBox="1078.6 172.3 10.2 7.6"><path d="M1080.6 174.3L1083.6999999999998 177.9L1086.8 174.3" fill="none" stroke="#333" stroke-width="1.3"/></svg>
<svg style="left:1125px;top:104px" width="20" height="21" viewBox="1125 104 20 21"><path d="M1141.5 106.3h-14l7.5 8.2-7.5 8.2h14" fill="none" stroke="#333" stroke-width="1.4" stroke-linejoin="miter"/></svg>
<svg style="left:1157.8px;top:110.8px" width="10" height="7.6" viewBox="1157.8 110.8 10 7.6"><path d="M1159.8 112.8L1162.8 116.39999999999999L1165.8 112.8" fill="none" stroke="#333" stroke-width="1.3"/></svg>
<div class="t" style="left:1185.0px;top:103.8px;font-size:9.42px;color:#3b8ed3;transform:scaleX(1.146);transform-origin:0 0;font-weight:bold;">A</div>
<div class="t" style="left:1185.2px;top:115.2px;font-size:9.42px;color:#333;transform:scaleX(1.217);transform-origin:0 0;">Z</div>
<svg style="left:1190px;top:107px" width="17" height="14" viewBox="1190 107 17 14"><path d="M1192.5 109.8h11.5l-4.5 5v4.5l-2.5-1.2v-3.3z" fill="none" stroke="#333" stroke-width="1.3" stroke-linejoin="round"/></svg>
<svg style="left:1210px;top:110.8px" width="10" height="7.6" viewBox="1210 110.8 10 7.6"><path d="M1212 112.8L1215.0 116.39999999999999L1218 112.8" fill="none" stroke="#333" stroke-width="1.3"/></svg>
<svg style="left:1123px;top:135px" width="23" height="21" viewBox="1123 135 23 21"><rect x="1125.2" y="137.3" width="18" height="15.8" fill="#ddecf8" stroke="#333" stroke-width="1.3"/><path d="M1125.2 140.5h18" stroke="#333" stroke-width="1.2"/><rect x="1125.8" y="138" width="16.8" height="2" fill="#fff"/><path d="M1134.2 142.5v8M1131.3 147.8l2.9 2.9 2.9-2.9" fill="none" stroke="#3b8ed3" stroke-width="1.3"/></svg>
<svg style="left:1150.4px;top:142px" width="10" height="7.6" viewBox="1150.4 142 10 7.6"><path d="M1152.4 144L1155.4 147.6L1158.4 144" fill="none" stroke="#333" stroke-width="1.3"/></svg>
<svg style="left:1184px;top:134px" width="22" height="22" viewBox="1184 134 22 22"><circle cx="1198.5" cy="142.8" r="5.3" fill="none" stroke="#333" stroke-width="1.3"/><path d="M1194.8 146.6l-8.5 7.6" stroke="#333" stroke-width="1.4"/></svg>
<svg style="left:1210px;top:142px" width="10" height="7.6" viewBox="1210 142 10 7.6"><path d="M1212 144L1215.0 147.6L1218 144" fill="none" stroke="#333" stroke-width="1.3"/></svg>
<svg style="left:1123px;top:165px" width="23" height="23" viewBox="1123 165 23 23"><path d="M1125.8 177L1135 167.8L1143 175.8L1133.8 185z" fill="#fff" stroke="#b048b8" stroke-width="1.3" stroke-linejoin="round"/><path d="M1125.8 177L1129.6 173.2L1137.6 181.2L1133.8 185z" fill="#d77ce0" stroke="#b048b8" stroke-width="1.3" stroke-linejoin="round"/></svg>
<svg style="left:1150.4px;top:173px" width="10" height="7.6" viewBox="1150.4 173 10 7.6"><path d="M1152.4 175L1155.4 178.6L1158.4 175" fill="none" stroke="#333" stroke-width="1.3"/></svg>
<svg style="left:1273px;top:104px" width="39" height="39" viewBox="1273 104 39 39"><rect x="1275.8" y="106.7" width="32.8" height="32.4" fill="none" stroke="#c8684e" stroke-width="1.4"/><rect x="1277.3" y="108.2" width="29.8" height="29.4" fill="none" stroke="#e8b0a0" stroke-width="1"/><rect x="1279.5" y="110.3" width="11.2" height="11" fill="none" stroke="#c8684e" stroke-width="1.4"/><rect x="1293.8" y="110.3" width="11.2" height="11" fill="none" stroke="#c8684e" stroke-width="1.4"/><rect x="1279.5" y="124.6" width="11.2" height="11" fill="none" stroke="#c8684e" stroke-width="1.4"/><rect x="1293.8" y="124.6" width="11.2" height="11" fill="none" stroke="#c8684e" stroke-width="1.4"/></svg>
<div class="t" style="left:1251.0px;top:147.3px;font-size:14.49px;color:#242424;transform:scaleX(0.973);transform-origin:0 0;">Suplementos</div>
<svg style="left:1362px;top:104px" width="39" height="39" viewBox="1362 104 39 39"><rect x="1362.6" y="104" width="38" height="38.2" fill="#da6640"/><circle cx="1381.6" cy="123.2" r="3.5" fill="#fff3e8"/><line x1="1384.53" y1="123.82" x2="1395.78" y2="126.21" stroke="#fff3e8" stroke-width="2.4"/><line x1="1383.83" y1="125.21" x2="1390.89" y2="131.56" stroke="#fff3e8" stroke-width="2.4"/><line x1="1382.53" y1="126.05" x2="1385.93" y2="136.51" stroke="#fff3e8" stroke-width="2.4"/><line x1="1380.98" y1="126.13" x2="1378.90" y2="135.92" stroke="#fff3e8" stroke-width="2.4"/><line x1="1379.59" y1="125.43" x2="1371.70" y2="134.20" stroke="#fff3e8" stroke-width="2.4"/><line x1="1378.75" y1="124.13" x2="1370.19" y2="126.91" stroke="#fff3e8" stroke-width="2.4"/><line x1="1378.67" y1="122.58" x2="1367.42" y2="120.19" stroke="#fff3e8" stroke-width="2.4"/><line x1="1379.37" y1="121.19" x2="1372.31" y2="114.84" stroke="#fff3e8" stroke-width="2.4"/><line x1="1380.67" y1="120.35" x2="1377.27" y2="109.89" stroke="#fff3e8" stroke-width="2.4"/><line x1="1382.22" y1="120.27" x2="1384.30" y2="110.48" stroke="#fff3e8" stroke-width="2.4"/><line x1="1383.61" y1="120.97" x2="1391.50" y2="112.20" stroke="#fff3e8" stroke-width="2.4"/><line x1="1384.45" y1="122.27" x2="1393.01" y2="119.49" stroke="#fff3e8" stroke-width="2.4"/></svg>
<div class="t" style="left:1364.0px;top:147.3px;font-size:14.49px;color:#242424;transform:scaleX(0.982);transform-origin:0 0;">Open</div>
<div class="t" style="left:1359.7px;top:166.0px;font-size:14.49px;color:#242424;transform:scaleX(0.945);transform-origin:0 0;">Claude</div>
<svg style="left:1451px;top:103px" width="41" height="41" viewBox="1451 103 41 41"><circle cx="1471.3" cy="122.9" r="19.1" fill="#2e9546"/><path d="M1460.6 112.1L1471.2 117.4V127L1460.6 121.2z M1460.6 121.2L1471.2 127V135.7L1460.6 130.4z M1471.6 110.2L1482.2 116V124.1L1471.6 118.8z M1471.6 118.8L1482.2 124.1V134.7L1471.6 128.9z" fill="#fff" stroke="#15301c" stroke-width="1.2" stroke-linejoin="round"/></svg>
<div class="t" style="left:1432.3px;top:147.3px;font-size:14.49px;color:#242424;transform:scaleX(0.964);transform-origin:0 0;">Numerous.ai</div>
<svg style="left:1565.2px;top:194.5px" width="15" height="10" viewBox="1565.2 194.5 15 10"><path d="M1567.2 196.5L1572.7 202.5L1578.2 196.5" fill="none" stroke="#333" stroke-width="1.4"/></svg>
<svg style="left:151px;top:198.8px" width="12" height="12" viewBox="151 198.8 12 12"><path d="M152 208.8V199.8h9" fill="none" stroke="#444" stroke-width="1.1"/><path d="M155 202.8l6 6M161 204.8v4h-4" fill="none" stroke="#444" stroke-width="1.1"/></svg>
<svg style="left:433.5px;top:198.8px" width="12" height="12" viewBox="433.5 198.8 12 12"><path d="M434.5 208.8V199.8h9" fill="none" stroke="#444" stroke-width="1.1"/><path d="M437.5 202.8l6 6M443.5 204.8v4h-4" fill="none" stroke="#444" stroke-width="1.1"/></svg>
<svg style="left:604.2px;top:198.8px" width="12" height="12" viewBox="604.2 198.8 12 12"><path d="M605.2 208.8V199.8h9" fill="none" stroke="#444" stroke-width="1.1"/><path d="M608.2 202.8l6 6M614.2 204.8v4h-4" fill="none" stroke="#444" stroke-width="1.1"/></svg>
<svg style="left:733px;top:198.8px" width="12" height="12" viewBox="733 198.8 12 12"><path d="M734 208.8V199.8h9" fill="none" stroke="#444" stroke-width="1.1"/><path d="M737 202.8l6 6M743 204.8v4h-4" fill="none" stroke="#444" stroke-width="1.1"/></svg>
<div class="t" style="left:18.5px;top:197.8px;font-size:12.03px;color:#333;transform:scaleX(1.035);transform-origin:0 0;">Área de Transferência</div>
<div class="t" style="left:282.0px;top:197.8px;font-size:12.03px;color:#333;transform:scaleX(0.982);transform-origin:0 0;">Fonte</div>
<div class="t" style="left:489.6px;top:197.8px;font-size:12.03px;color:#333;transform:scaleX(1.018);transform-origin:0 0;">Alinhamento</div>
<div class="t" style="left:649.9px;top:197.8px;font-size:12.03px;color:#333;transform:scaleX(1.061);transform-origin:0 0;">Número</div>
<div class="t" style="left:844.6px;top:197.8px;font-size:12.03px;color:#333;transform:scaleX(0.982);transform-origin:0 0;">Estilos</div>
<div class="t" style="left:1023.9px;top:197.8px;font-size:12.03px;color:#333;transform:scaleX(0.950);transform-origin:0 0;">Células</div>
<div class="t" style="left:1154.2px;top:197.8px;font-size:12.03px;color:#333;transform:scaleX(1.006);transform-origin:0 0;">Edição</div>
<div class="t" style="left:1255.0px;top:197.8px;font-size:12.03px;color:#333;transform:scaleX(1.018);transform-origin:0 0;">Suplementos</div>
<div class="t" style="left:1361.7px;top:197.8px;font-size:12.03px;color:#333;transform:scaleX(0.979);transform-origin:0 0;">Claude</div>
<div class="t" style="left:1419.7px;top:197.8px;font-size:12.03px;color:#333;transform:scaleX(1.041);transform-origin:0 0;">Commands Group</div>
<div class="a" style="left:12px;top:227px;width:193px;height:28px;background:#fff;border:1px solid #e3e3e3;border-radius:5px"></div>
<div class="t" style="left:17px;top:233px;font-size:15px;color:#222">A1</div>
<div class="a" style="left:231px;top:227px;width:103px;height:28px;background:#fff;border:1px solid #e3e3e3;border-radius:5px"></div>
<div class="a" style="left:340px;top:227px;width:1249px;height:28px;background:#fff;border:1px solid #e3e3e3;border-radius:5px"></div>
<svg style="left:185.6px;top:236.8px" width="15" height="9.6" viewBox="185.6 236.8 15 9.6"><path d="M187.6 238.8L193.1 244.4L198.6 238.8" fill="none" stroke="#333" stroke-width="1.4"/></svg>
<div class="a" style="left:217px;top:233.7px;width:3px;height:3px;background:#222"></div>
<div class="a" style="left:217px;top:238.8px;width:3px;height:3px;background:#222"></div>
<div class="a" style="left:217px;top:243.9px;width:3px;height:3px;background:#222"></div>
<svg style="left:237px;top:231px" width="20" height="18" viewBox="237 231 20 18"><path d="M239 233.3l14 13.4M253 233.3l-14 13.4" stroke="#9a9a9a" stroke-width="1.2"/></svg>
<svg style="left:263px;top:231px" width="24" height="18" viewBox="263 231 24 18"><path d="M265.5 240.5l5.5 5.5 13.2-12.8" fill="none" stroke="#9a9a9a" stroke-width="1.2"/></svg>
<div class="t" style="left:294px;top:229px;font-family:'Liberation Serif',serif;font-style:italic;font-size:20px;color:#2a2a2a">fx</div>
<svg style="left:318.2px;top:236.3px" width="14.2" height="9.3" viewBox="318.2 236.3 14.2 9.3"><path d="M320.2 238.3L325.3 243.60000000000002L330.4 238.3" fill="none" stroke="#888" stroke-width="1.2"/></svg>
<svg style="left:1571.2px;top:234.3px" width="15.5" height="9.8" viewBox="1571.2 234.3 15.5 9.8"><path d="M1573.2 236.3L1578.95 242.10000000000002L1584.7 236.3" fill="none" stroke="#333" stroke-width="1.4"/></svg>
<div class="a" style="left:34px;top:286px;width:1541px;height:564px;background:#fff"></div>
<div class="colh" style="left:34px;width:17px">A</div>
<div class="colh" style="left:51px;width:13px">B</div>
<div class="colh" style="left:64px;width:108px">C</div>
<div class="colh" style="left:172px;width:380px">D</div>
<div class="colh" style="left:552px;width:256px">E</div>
<div class="colh" style="left:808px;width:145px">F</div>
<div class="colh" style="left:953px;width:168px">G</div>
<div class="colh" style="left:1121px;width:93px">H</div>
<div class="colh" style="left:1214px;width:93px">I</div>
<div class="colh" style="left:1307px;width:93px">J</div>
<div class="colh" style="left:1400px;width:93px">K</div>
<div class="colh" style="left:1493px;width:93px">L</div>
<div class="a" style="left:0;top:285px;width:1577px;height:1px;background:#a9a9a9"></div>
<div class="a" style="left:33px;top:262px;width:1px;height:24px;background:#d6d6d6"></div>
<div class="a" style="left:0;top:0;width:1600px;height:850px;overflow:hidden">
<div class="rowh" style="top:286px;height:56px"><span>1</span></div>
<div class="rh" style="top:341px"></div>
<div class="rowh" style="top:342px;height:44px"><span>2</span></div>
<div class="rh" style="top:385px"></div>
<div class="rowh" style="top:386px;height:23px"><span>3</span></div>
<div class="rh" style="top:408px"></div>
<div class="rowh" style="top:409px;height:43px"><span>4</span></div>
<div class="rh" style="top:451px"></div>
<div class="rowh" style="top:452px;height:42px"><span>7</span></div>
<div class="rh" style="top:493px"></div>
<div class="rowh" style="top:494px;height:41px"><span>8</span></div>
<div class="rh" style="top:534px"></div>
<div class="rowh" style="top:535px;height:42px"><span>9</span></div>
<div class="rh" style="top:576px"></div>
<div class="rowh" style="top:577px;height:41px"><span>10</span></div>
<div class="rh" style="top:617px"></div>
<div class="rowh" style="top:618px;height:42px"><span>11</span></div>
<div class="rh" style="top:659px"></div>
<div class="rowh" style="top:660px;height:41px"><span>12</span></div>
<div class="rh" style="top:700px"></div>
<div class="rowh" style="top:701px;height:42px"><span>13</span></div>
<div class="rh" style="top:742px"></div>
<div class="rowh" style="top:743px;height:41px"><span>14</span></div>
<div class="rh" style="top:783px"></div>
<div class="rowh" style="top:784px;height:42px"><span>15</span></div>
<div class="rh" style="top:825px"></div>
<div class="rowh" style="top:826px;height:42px"><span>16</span></div>
<div class="rh" style="top:867px"></div>
<div class="a" style="left:34px;top:286px;width:1541px;height:56px;background:#d9d9d9"></div>
<div class="a" style="left:314px;top:286px;width:148px;height:56px;background:#000"></div>
<div class="a" style="left:34px;top:342px;width:1541px;height:44px;background:#000"></div>
<div class="a" style="left:159px;top:352px;width:144px;height:34px;background:#fff"></div>
<div class="t" style="left:223.4px;top:306.1px;font-size:16.30px;font-weight:bold;color:#111;transform:scaleX(0.758);transform-origin:0 0;">REGISTER</div>
<div class="t" style="left:337.5px;top:306.1px;font-size:16.30px;font-weight:bold;color:#fff;transform:scaleX(0.834);transform-origin:0 0;">MAINTENANCE</div>
<div class="t" style="left:479.7px;top:306.1px;font-size:16.30px;font-weight:bold;color:#111;transform:scaleX(0.801);transform-origin:0 0;">CALIBRATION</div>
<div class="t" style="left:616.3px;top:306.1px;font-size:16.30px;font-weight:bold;color:#111;transform:scaleX(0.772);transform-origin:0 0;">SCHEDULE</div>
<div class="t" style="left:750.0px;top:306.1px;font-size:16.30px;font-weight:bold;color:#111;transform:scaleX(0.750);transform-origin:0 0;">CHECKLIST</div>
<div class="t" style="left:880.0px;top:306.1px;font-size:16.30px;font-weight:bold;color:#111;transform:scaleX(0.755);transform-origin:0 0;">REPORTS</div>
<div class="t" style="left:983.4px;top:306.1px;font-size:16.30px;font-weight:bold;color:#111;transform:scaleX(0.795);transform-origin:0 0;">DASHBOARDS</div>
<div class="t" style="left:1103.5px;top:306.1px;font-size:16.30px;font-weight:bold;color:#111;transform:scaleX(0.821);transform-origin:0 0;">INSTRUCTION</div>
<div class="t" style="left:199.4px;top:362.3px;font-size:16.09px;font-weight:bold;color:#3a3a3a;transform:scaleX(0.800);transform-origin:0 0;">CONTROL</div>
<svg style="left:0;top:0" width="200" height="420" viewBox="0 0 200 420">
<defs><clipPath id="cl1"><polygon points="88.1,340.0 76.0,352.1 59.0,352.1 46.9,340.0 46.9,323.0 59.0,310.9 76.0,310.9 88.1,323.0"/></clipPath><clipPath id="cl2"><polygon points="152.6,339.7 140.5,351.8 123.5,351.8 111.4,339.7 111.4,322.7 123.5,310.6 140.5,310.6 152.6,322.7"/></clipPath><clipPath id="cg"><polygon points="118.6,344.3 106.5,356.4 89.5,356.4 77.4,344.3 77.4,327.3 89.5,315.2 106.5,315.2 118.6,327.3"/></clipPath></defs>
<polygon points="88.1,340.0 76.0,352.1 59.0,352.1 46.9,340.0 46.9,323.0 59.0,310.9 76.0,310.9 88.1,323.0" fill="#c6efc0"/><polygon points="152.6,339.7 140.5,351.8 123.5,351.8 111.4,339.7 111.4,322.7 123.5,310.6 140.5,310.6 152.6,322.7" fill="#c6efc0"/>
<polygon points="118.6,344.3 106.5,356.4 89.5,356.4 77.4,344.3 77.4,327.3 89.5,315.2 106.5,315.2 118.6,327.3" fill="#7c7c7c"/>
<g clip-path="url(#cg)"><polygon points="88.1,340.0 76.0,352.1 59.0,352.1 46.9,340.0 46.9,323.0 59.0,310.9 76.0,310.9 88.1,323.0" fill="#8aa66f"/><polygon points="152.6,339.7 140.5,351.8 123.5,351.8 111.4,339.7 111.4,322.7 123.5,310.6 140.5,310.6 152.6,322.7" fill="#8aa66f"/></g>
<polygon points="99.3,320.7 87.2,332.8 70.2,332.8 58.1,320.7 58.1,303.7 70.2,291.6 87.2,291.6 99.3,303.7" fill="#12c05e"/><polygon points="139.6,363.3 127.5,375.4 110.5,375.4 98.4,363.3 98.4,346.3 110.5,334.2 127.5,334.2 139.6,346.3" fill="#12c05e"/>
<g clip-path="url(#cl1)"><polygon points="99.3,320.7 87.2,332.8 70.2,332.8 58.1,320.7 58.1,303.7 70.2,291.6 87.2,291.6 99.3,303.7" fill="#40c562"/></g>
<g clip-path="url(#cl2)"><polygon points="139.6,363.3 127.5,375.4 110.5,375.4 98.4,363.3 98.4,346.3 110.5,334.2 127.5,334.2 139.6,346.3" fill="#40c562"/></g>
</svg>
<div class="t" style="left:36.0px;top:385.1px;font-size:18.12px;font-weight:bold;color:#111;transform:scaleX(0.958);transform-origin:0 0;-webkit-text-stroke:1.2px #111;">SHEETS TECH</div>
<div class="a" style="left:66px;top:410px;width:105.5px;height:41px;background:#d9d9d9"></div>
<div class="t" style="left:81.7px;top:422.9px;font-size:14.78px;font-weight:bold;color:#333;transform:scaleX(0.986);transform-origin:0 0;">Date</div>
<div class="fb" style="left:152.0px"></div>
<div class="a" style="left:174.5px;top:410px;width:376.5px;height:41px;background:#d9d9d9"></div>
<div class="t" style="left:190.3px;top:422.9px;font-size:14.78px;font-weight:bold;color:#333;transform:scaleX(1.036);transform-origin:0 0;">Item</div>
<div class="fb" style="left:531.5px"></div>
<div class="a" style="left:554.5px;top:410px;width:252.5px;height:41px;background:#d9d9d9"></div>
<div class="t" style="left:569.7px;top:422.9px;font-size:14.78px;font-weight:bold;color:#333;transform:scaleX(0.989);transform-origin:0 0;">Type Maintenance</div>
<div class="fb" style="left:787.5px"></div>
<div class="a" style="left:810px;top:410px;width:141.5px;height:41px;background:#d9d9d9"></div>
<div class="t" style="left:826.0px;top:422.9px;font-size:14.78px;font-weight:bold;color:#333;transform:scaleX(0.901);transform-origin:0 0;">Cost</div>
<div class="fb" style="left:932.0px"></div>
<div class="a" style="left:954.5px;top:410px;width:166.0px;height:41px;background:#d9d9d9"></div>
<div class="t" style="left:969.7px;top:422.9px;font-size:14.78px;font-weight:bold;color:#333;transform:scaleX(0.949);transform-origin:0 0;">status</div>
<div class="fb" style="left:1101.0px"></div>
<div class="a" style="left:34px;top:451px;width:1541px;height:1px;background:#a6a6a6"></div>
<div class="a" style="left:954px;top:452.0px;width:167px;height:41.0px;background:#c00000"></div>
<div class="a" style="left:65px;top:492.8px;width:1056px;height:1px;background:#d4d4d4"></div>
<div class="t" style="left:81.7px;top:465.8px;font-size:15.80px;color:#222;transform:scaleX(1.045);transform-origin:0 0;">01/02/2020</div>
<div class="t" style="left:190.3px;top:465.8px;font-size:15.80px;color:#222;transform:scaleX(0.958);transform-origin:0 0;">Maintenance 3</div>
<div class="t" style="left:569.7px;top:465.8px;font-size:15.80px;color:#222;transform:scaleX(0.955);transform-origin:0 0;">Preventive maintenance</div>
<div class="t" style="left:826.0px;top:465.8px;font-size:15.80px;color:#222;transform:scaleX(0.966);transform-origin:0 0;">$ 300,00</div>
<div class="t" style="left:970.5px;top:465.8px;font-size:15.80px;color:#ffe0dc;transform:scaleX(0.942);transform-origin:0 0;">Unaccomplished</div>
<div class="a" style="left:954px;top:493.6px;width:167px;height:41.0px;background:#375623"></div>
<div class="a" style="left:65px;top:534.3px;width:1056px;height:1px;background:#d4d4d4"></div>
<div class="t" style="left:81.7px;top:507.3px;font-size:15.80px;color:#222;transform:scaleX(1.045);transform-origin:0 0;">01/02/2020</div>
<div class="t" style="left:190.3px;top:507.3px;font-size:15.80px;color:#222;transform:scaleX(0.958);transform-origin:0 0;">Maintenance 4</div>
<div class="t" style="left:569.7px;top:507.3px;font-size:15.80px;color:#222;transform:scaleX(0.955);transform-origin:0 0;">Corrective maintenance</div>
<div class="t" style="left:826.0px;top:507.3px;font-size:15.80px;color:#222;transform:scaleX(0.966);transform-origin:0 0;">$ 200,00</div>
<div class="t" style="left:970.5px;top:507.3px;font-size:15.80px;color:#e8f5d8;transform:scaleX(0.942);transform-origin:0 0;">Accomplished</div>
<div class="a" style="left:954px;top:535.1px;width:167px;height:41.0px;background:#c00000"></div>
<div class="a" style="left:65px;top:575.9px;width:1056px;height:1px;background:#d4d4d4"></div>
<div class="t" style="left:81.7px;top:548.9px;font-size:15.80px;color:#222;transform:scaleX(1.045);transform-origin:0 0;">01/03/2020</div>
<div class="t" style="left:190.3px;top:548.9px;font-size:15.80px;color:#222;transform:scaleX(0.958);transform-origin:0 0;">Maintenance 5</div>
<div class="t" style="left:569.7px;top:548.9px;font-size:15.80px;color:#222;transform:scaleX(0.955);transform-origin:0 0;">Predictive maintenance</div>
<div class="t" style="left:826.0px;top:548.9px;font-size:15.80px;color:#222;transform:scaleX(0.966);transform-origin:0 0;">$ 200,00</div>
<div class="t" style="left:970.5px;top:548.9px;font-size:15.80px;color:#ffe0dc;transform:scaleX(0.942);transform-origin:0 0;">Unaccomplished</div>
<div class="a" style="left:954px;top:576.7px;width:167px;height:41.0px;background:#375623"></div>
<div class="a" style="left:65px;top:617.4px;width:1056px;height:1px;background:#d4d4d4"></div>
<div class="t" style="left:81.7px;top:590.5px;font-size:15.80px;color:#222;transform:scaleX(1.045);transform-origin:0 0;">01/04/2020</div>
<div class="t" style="left:190.3px;top:590.5px;font-size:15.80px;color:#222;transform:scaleX(0.958);transform-origin:0 0;">Maintenance 6</div>
<div class="t" style="left:569.7px;top:590.5px;font-size:15.80px;color:#222;transform:scaleX(0.955);transform-origin:0 0;">Corrective maintenance</div>
<div class="t" style="left:826.0px;top:590.5px;font-size:15.80px;color:#222;transform:scaleX(0.966);transform-origin:0 0;">$ 400,00</div>
<div class="t" style="left:970.5px;top:590.5px;font-size:15.80px;color:#e8f5d8;transform:scaleX(0.942);transform-origin:0 0;">Accomplished</div>
<div class="a" style="left:954px;top:618.2px;width:167px;height:41.0px;background:#c00000"></div>
<div class="a" style="left:65px;top:659.0px;width:1056px;height:1px;background:#d4d4d4"></div>
<div class="t" style="left:81.7px;top:632.0px;font-size:15.80px;color:#222;transform:scaleX(1.045);transform-origin:0 0;">01/05/2020</div>
<div class="t" style="left:190.3px;top:632.0px;font-size:15.80px;color:#222;transform:scaleX(0.958);transform-origin:0 0;">Maintenance 7</div>
<div class="t" style="left:569.7px;top:632.0px;font-size:15.80px;color:#222;transform:scaleX(0.955);transform-origin:0 0;">Preventive maintenance</div>
<div class="t" style="left:826.0px;top:632.0px;font-size:15.80px;color:#222;transform:scaleX(0.966);transform-origin:0 0;">$ 650,00</div>
<div class="t" style="left:970.5px;top:632.0px;font-size:15.80px;color:#ffe0dc;transform:scaleX(0.942);transform-origin:0 0;">Unaccomplished</div>
<div class="a" style="left:954px;top:659.8px;width:167px;height:41.0px;background:#375623"></div>
<div class="a" style="left:65px;top:700.6px;width:1056px;height:1px;background:#d4d4d4"></div>
<div class="t" style="left:81.7px;top:673.6px;font-size:15.80px;color:#222;transform:scaleX(1.045);transform-origin:0 0;">02/05/2020</div>
<div class="t" style="left:190.3px;top:673.6px;font-size:15.80px;color:#222;transform:scaleX(0.958);transform-origin:0 0;">Maintenance 8</div>
<div class="t" style="left:569.7px;top:673.6px;font-size:15.80px;color:#222;transform:scaleX(0.955);transform-origin:0 0;">Corrective maintenance</div>
<div class="t" style="left:826.0px;top:673.6px;font-size:15.80px;color:#222;transform:scaleX(0.966);transform-origin:0 0;">$ 250,00</div>
<div class="t" style="left:970.5px;top:673.6px;font-size:15.80px;color:#e8f5d8;transform:scaleX(0.942);transform-origin:0 0;">Accomplished</div>
<div class="a" style="left:954px;top:701.4px;width:167px;height:41.0px;background:#c00000"></div>
<div class="a" style="left:65px;top:742.1px;width:1056px;height:1px;background:#d4d4d4"></div>
<div class="t" style="left:81.7px;top:715.1px;font-size:15.80px;color:#222;transform:scaleX(1.045);transform-origin:0 0;">01/05/2020</div>
<div class="t" style="left:190.3px;top:715.1px;font-size:15.80px;color:#222;transform:scaleX(0.958);transform-origin:0 0;">Maintenance 9</div>
<div class="t" style="left:569.7px;top:715.1px;font-size:15.80px;color:#222;transform:scaleX(0.955);transform-origin:0 0;">Preventive maintenance</div>
<div class="t" style="left:826.0px;top:715.1px;font-size:15.80px;color:#222;transform:scaleX(0.966);transform-origin:0 0;">$ 100,00</div>
<div class="t" style="left:970.5px;top:715.1px;font-size:15.80px;color:#ffe0dc;transform:scaleX(0.942);transform-origin:0 0;">Unaccomplished</div>
<div class="a" style="left:954px;top:742.9px;width:167px;height:41.0px;background:#375623"></div>
<div class="a" style="left:65px;top:783.7px;width:1056px;height:1px;background:#d4d4d4"></div>
<div class="t" style="left:81.7px;top:756.7px;font-size:15.80px;color:#222;transform:scaleX(1.045);transform-origin:0 0;">02/06/2020</div>
<div class="t" style="left:190.3px;top:756.7px;font-size:15.80px;color:#222;transform:scaleX(0.958);transform-origin:0 0;">Maintenance 10</div>
<div class="t" style="left:569.7px;top:756.7px;font-size:15.80px;color:#222;transform:scaleX(0.955);transform-origin:0 0;">Corrective maintenance</div>
<div class="t" style="left:826.0px;top:756.7px;font-size:15.80px;color:#222;transform:scaleX(0.966);transform-origin:0 0;">$ 300,00</div>
<div class="t" style="left:970.5px;top:756.7px;font-size:15.80px;color:#e8f5d8;transform:scaleX(0.942);transform-origin:0 0;">Accomplished</div>
<div class="a" style="left:954px;top:784.5px;width:167px;height:41.0px;background:#375623"></div>
<div class="a" style="left:65px;top:825.2px;width:1056px;height:1px;background:#d4d4d4"></div>
<div class="t" style="left:81.7px;top:798.3px;font-size:15.80px;color:#222;transform:scaleX(1.045);transform-origin:0 0;">03/06/2020</div>
<div class="t" style="left:190.3px;top:798.3px;font-size:15.80px;color:#222;transform:scaleX(0.958);transform-origin:0 0;">Maintenance 11</div>
<div class="t" style="left:569.7px;top:798.3px;font-size:15.80px;color:#222;transform:scaleX(0.955);transform-origin:0 0;">Preventive maintenance</div>
<div class="t" style="left:826.0px;top:798.3px;font-size:15.80px;color:#222;transform:scaleX(0.966);transform-origin:0 0;">$ 50,00</div>
<div class="t" style="left:970.5px;top:798.3px;font-size:15.80px;color:#e8f5d8;transform:scaleX(0.942);transform-origin:0 0;">Accomplished</div>
<div class="a" style="left:954px;top:826.0px;width:167px;height:41.0px;background:#375623"></div>
<div class="a" style="left:65px;top:866.8px;width:1056px;height:1px;background:#d4d4d4"></div>
<div class="t" style="left:81.7px;top:839.8px;font-size:15.80px;color:#222;transform:scaleX(1.045);transform-origin:0 0;">04/07/2020</div>
<div class="t" style="left:190.3px;top:839.8px;font-size:15.80px;color:#222;transform:scaleX(0.958);transform-origin:0 0;">Maintenance 12</div>
<div class="t" style="left:569.7px;top:839.8px;font-size:15.80px;color:#222;transform:scaleX(0.955);transform-origin:0 0;">Corrective maintenance</div>
<div class="t" style="left:826.0px;top:839.8px;font-size:15.80px;color:#222;transform:scaleX(0.966);transform-origin:0 0;">$ 400,00</div>
<div class="t" style="left:970.5px;top:839.8px;font-size:15.80px;color:#e8f5d8;transform:scaleX(0.942);transform-origin:0 0;">Accomplished</div>
<div class="a" style="left:64.5px;top:452px;width:1px;height:400px;background:#d4d4d4"></div>
<div class="a" style="left:172px;top:452px;width:1px;height:400px;background:#d4d4d4"></div>
<div class="a" style="left:552px;top:452px;width:1px;height:400px;background:#d4d4d4"></div>
<div class="a" style="left:808px;top:452px;width:1px;height:400px;background:#d4d4d4"></div>
<div class="a" style="left:953px;top:452px;width:1px;height:400px;background:#d4d4d4"></div>
</div>
<div class="a" style="left:0;top:850px;width:1600px;height:1px;background:#dadada"></div>
<div class="a" style="left:18.5px;top:863.0px;width:3px;height:3px;background:#222"></div>
<div class="a" style="left:18.5px;top:868.0px;width:3px;height:3px;background:#222"></div>
<div class="a" style="left:18.5px;top:873.0px;width:3px;height:3px;background:#222"></div>
<div class="a" style="left:38px;top:856px;width:1500px;height:26px;border-radius:13px;background:#f6f6f6"></div>
<svg style="left:45px;top:864px" width="10" height="11" viewBox="0 0 10 11"><path d="M8.5 0.5L1 5.5l7.5 5z" fill="#777" stroke="#777" stroke-linejoin="round"/></svg>
<div class="a" style="left:60px;top:864px;width:1479px;height:10px;border-radius:5px;background:#767676"></div>
<svg style="left:1560px;top:864px" width="10" height="11" viewBox="0 0 10 11"><path d="M1.5 0.5L9 5.5l-7.5 5z" fill="#777" stroke="#777" stroke-linejoin="round"/></svg>
<svg style="left:1582px;top:268px" width="12" height="9" viewBox="0 0 12 9"><path d="M6 1L11 8H1z" fill="#777" stroke="#777" stroke-linejoin="round"/></svg>
<div class="a" style="left:1583px;top:284px;width:10px;height:20px;border-radius:5px;background:#737373"></div>
<svg style="left:1582px;top:837px" width="12" height="9" viewBox="0 0 12 9"><path d="M6 8L11 1H1z" fill="#777" stroke="#777" stroke-linejoin="round"/></svg>
<div class="a" style="left:0;top:888.5px;width:1600px;height:1px;background:#dcdcdc"></div>
<div class="a" style="left:1px;top:889.5px;width:1598px;height:26px;background:#f3f3f3"></div>
<div class="t" style="left:15.0px;top:895.7px;font-size:13.04px;color:#333;transform:scaleX(0.963);transform-origin:0 0;">Pronto</div>
<svg style="left:77px;top:895px" width="19" height="17" viewBox="0 0 19 17"><path d="M1 14.5V1.5h15v5" fill="none" stroke="#333" stroke-width="1.2"/><path d="M1 4h15" stroke="#333" stroke-width="1.6"/><path d="M3.5 7h2M3.5 10h2" stroke="#333" stroke-width="1.1"/><circle cx="12" cy="11.5" r="4.8" fill="#f3f3f3" stroke="#333" stroke-width="1.2"/><circle cx="12" cy="11.5" r="2" fill="#333"/></svg>
<svg style="left:116px;top:893px" width="19" height="19" viewBox="0 0 19 19"><circle cx="8" cy="3" r="2" fill="none" stroke="#333" stroke-width="1.2"/><path d="M1.5 4.5c2 2 4 2.5 6.5 2.5s4.5-.5 6.5-2.5M8 7v4l-3.5 6.5M8 11l2 2" fill="none" stroke="#333" stroke-width="1.2" stroke-linecap="round"/><path d="M11 12l6 6M17 12l-6 6" stroke="#333" stroke-width="1.2"/></svg>
<div class="t" style="left:138.0px;top:895.3px;font-size:13.62px;font-weight:bold;color:#222;transform:scaleX(0.901);transform-origin:0 0;">Acessibilidade: investigar</div>
<div class="a" style="left:1232.5px;top:889.5px;width:47px;height:26px;background:#e3e3e3"></div>
<svg style="left:1247px;top:893px" width="18" height="17" viewBox="0 0 18 17"><rect x="1" y="1" width="15.5" height="15" fill="none" stroke="#333" stroke-width="1.2"/><path d="M6.2 1v15M11.3 1v15M1 6h15.5M1 11h15.5" stroke="#333" stroke-width="1.2"/></svg>
<svg style="left:1296px;top:893px" width="18" height="17" viewBox="0 0 18 17"><rect x="1" y="1" width="16" height="15" fill="none" stroke="#333" stroke-width="1.2"/><rect x="4.5" y="3.5" width="9" height="10" fill="none" stroke="#333" stroke-width="1.1"/><path d="M6.5 6.5h5M6.5 8.5h5M6.5 10.5h5" stroke="#333" stroke-width="1"/></svg>
<svg style="left:1344px;top:893px" width="19" height="17" viewBox="0 0 19 17"><rect x="1" y="1" width="17" height="15" fill="none" stroke="#333" stroke-width="1.2"/><path d="M6 1v9h7V1M1 10h5" fill="none" stroke="#333" stroke-width="1.2"/></svg>
<div class="a" style="left:1383px;top:902px;width:10px;height:1.3px;background:#333"></div>
<div class="a" style="left:1399px;top:902.5px;width:121px;height:1px;background:#666"></div>
<div class="a" style="left:1451px;top:895.5px;width:6px;height:13px;background:#666;border-radius:1px"></div>
<div class="a" style="left:1459px;top:899px;width:1px;height:8px;background:#666"></div>
<div class="a" style="left:1527px;top:902px;width:9px;height:1.2px;background:#333"></div>
<div class="a" style="left:1531px;top:897.5px;width:1.2px;height:9px;background:#333"></div>
<div class="t" style="left:1552.0px;top:895.9px;font-size:13.04px;color:#333;transform:scaleX(0.881);transform-origin:0 0;">90%</div>
<div class="a" style="left:0;top:914px;width:1600px;height:2px;background:#2a2a2a"></div>
<div class="a" style="left:0;top:0;width:1px;height:916px;background:#3a3a3a"></div>
<svg style="left:14px;top:268px" width="17" height="16" viewBox="0 0 17 16"><path d="M16 1V15H1z" fill="#b9b9b9"/></svg>
</body></html>
